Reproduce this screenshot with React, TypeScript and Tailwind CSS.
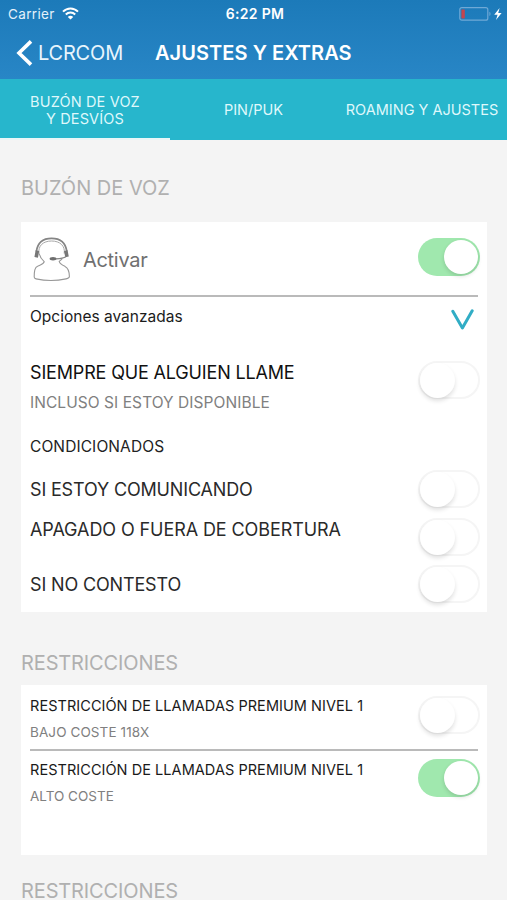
import { useState } from "react"
import clsx from "clsx"

const TABS = [
  { id: "buzon", lines: ["BUZÓN DE VOZ", "Y DESVÍOS"] },
  { id: "pin", lines: ["PIN/PUK"] },
  { id: "roaming", lines: ["ROAMING Y AJUSTES"] },
]

function Toggle({ label, defaultOn = false, className }: { label: string; defaultOn?: boolean; className?: string }) {
  const [on, setOn] = useState(defaultOn)
  return (
    <button
      type="button"
      role="switch"
      aria-checked={on}
      aria-label={label}
      onClick={() => setOn(!on)}
      className={clsx(
        "flex h-[38px] w-[62px] shrink-0 items-center rounded-full",
        on ? "justify-end bg-[#a0e8ae] pr-[2px]" : "justify-start border-2 border-[#f5f5f5] bg-white",
        className,
      )}
    >
      <span
        className={clsx(
          "rounded-full bg-white",
          on
            ? "size-[34px] shadow-[0_2px_4px_rgba(0,0,0,0.14)]"
            : "size-[35px] shadow-[0_3px_4px_rgba(0,0,0,0.12)]",
        )}
      />
    </button>
  )
}

function WifiIcon() {
  return (
    <svg width="17" height="13" viewBox="0 0 17 13" fill="none" stroke="white" strokeWidth="2">
      <path d="M1 4.6C5.2 .3 11.8 .3 16 4.6" />
      <path d="M3.8 7.5C6.4 4.9 10.6 4.9 13.2 7.5" />
      <path d="M8.5 12.6L5.8 9.9C7.3 8.4 9.7 8.4 11.2 9.9Z" fill="white" stroke="none" />
    </svg>
  )
}

function BatteryIcon() {
  return (
    <svg width="43" height="16" viewBox="0 0 43 16" fill="none">
      <rect x="0.8" y="1.6" width="28" height="12.6" rx="2" stroke="#6fa9d6" strokeWidth="1.2" />
      <rect x="2.4" y="3.4" width="3.4" height="9" rx="0.6" fill="#c4454f" />
      <path d="M30.4 5.8C31.9 6.4 31.9 9.4 30.4 10Z" fill="#6fa9d6" />
      <path d="M40.6 2L35.2 8.8H38.6L37 14L42.6 7H39.2Z" fill="white" />
    </svg>
  )
}

function HeadsetIcon() {
  return (
    <svg width="38" height="46" viewBox="0 0 38 46" fill="none" strokeLinecap="butt">
      <path
        d="M6.2 17.5C7 21.5 9 23.8 11.2 25.6C11 28 8 28.6 5 30C1.5 31.5 1.3 35 1.2 41C1.2 42 1.6 42.6 3 42.9C12 44.8 24 44.8 33 42.9C35 42.5 36.4 42 36.4 40.5C36.3 35 35.5 32 32 30.4C29 29 26.8 28 26.2 25.4C27.4 24.6 28.4 23.6 29.2 22.6"
        stroke="#989898"
        strokeWidth="1.1"
      />
      <path d="M6 17.5C4.8 10 10 5 18.6 5C27 5 32.4 10 31.2 17.5" stroke="#a8a8a8" strokeWidth="1" />
      <path d="M3.4 15.5C4.6 6.5 10.5 2.4 18.6 2.4C26.8 2.4 32.6 6.5 33.8 15.5" stroke="#858585" strokeWidth="1.8" />
      <path d="M4.4 14.6L3.2 21.4M32.8 14.6L34 20.8" stroke="#777" strokeWidth="3.6" />
      <path d="M33 20.5C30.5 22.6 27 22.8 23 22.8" stroke="#858585" strokeWidth="1.2" />
      <ellipse cx="20" cy="22.8" rx="3.4" ry="1.7" fill="#6e6e6e" />
    </svg>
  )
}

function SectionTitle({ children }: { children: string }) {
  return <h2 className="text-[20px] leading-5 text-[#b0b0b0]">{children}</h2>
}

function Divider() {
  return <div className="mr-[2px] h-[2px] bg-[#bababa]" />
}

export default function App() {
  const [tab, setTab] = useState("buzon")

  return (
    <div className="flex h-[900px] w-[507px] flex-col overflow-hidden bg-[#f4f4f4] font-['Inter',sans-serif]">
      <header className="h-[79px] shrink-0 bg-linear-to-b from-[#1c7ab9] to-[#2886c6] text-white">
        <div className="grid h-[27px] grid-cols-3 items-center pl-2 pr-[5px] text-[13.5px] leading-5">
          <div className="flex items-center gap-[7px] text-[#e4f1fa]">
            <span className="tracking-[0.35px]">Carrier</span>
            <WifiIcon />
          </div>
          <span className="text-center text-[14px] font-semibold tracking-[0.3px]">6:22 PM</span>
          <div className="flex justify-end">
            <BatteryIcon />
          </div>
        </div>
        <div className="flex h-[51px] items-center pl-4">
          <button type="button" className="flex items-center gap-[5px] text-[20px] leading-5 tracking-[-0.2px] text-[#e8f5fd]">
            <svg width="17" height="26" viewBox="0 0 17 26" fill="none" stroke="white" strokeWidth="3.6">
              <path d="M15 1.4L3 13L15 24.6" />
            </svg>
            LCRCOM
          </button>
          <h1 className="ml-8 text-[20px] font-semibold leading-5 tracking-[0.05px]">AJUSTES Y EXTRAS</h1>
        </div>
      </header>

      <nav className="grid h-[61px] shrink-0 grid-cols-[170px_167px_170px] bg-[#27b6cc] text-[14.5px] leading-[17px] text-[#dff8fb]">
        {TABS.map((t) => (
          <button
            key={t.id}
            type="button"
            onClick={() => setTab(t.id)}
            className={clsx(
              "flex flex-col items-center justify-center whitespace-nowrap border-b-2 pt-[2px]",
              tab === t.id ? "border-[#e9f6f7] tracking-[0.15px]" : "border-[#27b6cc]",
            )}
          >
            {t.lines.map((line) => (
              <span key={line}>{line}</span>
            ))}
          </button>
        ))}
      </nav>

      <main className="px-5 pl-[21px] pt-[38px]">
        <SectionTitle>BUZÓN DE VOZ</SectionTitle>

        <section className="mt-[24px] h-[390px] bg-white pl-[9px] pr-[7px] leading-5 text-[#2a2a2a]">
          <div className="flex h-[73px] items-start pt-4">
            <span className="ml-[3px] -mt-[2px]">
              <HeadsetIcon />
            </span>
            <span className="ml-3 mt-[12px] text-[20px] tracking-[-0.3px] text-[#707070]">Activar</span>
            <Toggle label="Activar" defaultOn className="ml-auto" />
          </div>
          <Divider />

          <div className="flex h-[64px] items-start justify-between pr-[6px] pt-[10px]">
            <span className="text-[15.5px] text-[#1c1c1c]">Opciones avanzadas</span>
            <svg className="mt-[2px]" width="23" height="21" viewBox="0 0 23 21" fill="none" stroke="#31adc5" strokeWidth="3" strokeLinecap="round" strokeLinejoin="round">
              <path d="M1.8 2.2L11.4 19L21.2 1.8" />
            </svg>
          </div>

          <div className="flex h-[75px] items-start justify-between">
            <div className="flex flex-col gap-[10px] pt-[2px]">
              <span className="text-[18px] tracking-[-0.16px] text-[#111]">SIEMPRE QUE ALGUIEN LLAME</span>
              <span className="text-[15.5px] tracking-[0.06px] text-[#808080]">INCLUSO SI ESTOY DISPONIBLE</span>
            </div>
            <Toggle label="Siempre que alguien llame" />
          </div>

          <div className="h-[34px] pt-px text-[15.5px] tracking-[0.1px] text-[#222]">CONDICIONADOS</div>

          <div className="flex h-[48px] items-start justify-between text-[18px]">
            <span className="mt-[10px] tracking-[-0.16px]">SI ESTOY COMUNICANDO</span>
            <Toggle label="Si estoy comunicando" />
          </div>
          <div className="flex h-[47px] items-start justify-between text-[18px]">
            <span className="mt-[2px] tracking-[-0.09px]">APAGADO O FUERA DE COBERTURA</span>
            <Toggle label="Apagado o fuera de cobertura" />
          </div>
          <div className="flex items-start justify-between text-[18px]">
            <span className="mt-[10px] tracking-[-0.15px]">SI NO CONTESTO</span>
            <Toggle label="Si no contesto" />
          </div>
        </section>

        <div className="mt-[41px] tracking-[-0.13px]">
          <SectionTitle>RESTRICCIONES</SectionTitle>
        </div>

        <section className="mt-3 h-[170px] bg-white pl-[9px] pr-[7px] leading-5">
          <div className="flex h-[64px] items-start justify-between pt-[11px]">
            <div className="flex flex-col gap-[6px]">
              <span className="text-[14.5px] tracking-[0.05px] text-[#1a1a1a]">RESTRICCIÓN DE LLAMADAS PREMIUM NIVEL 1</span>
              <span className="text-[13.5px] tracking-[0.1px] text-[#808080]">BAJO COSTE 118X</span>
            </div>
            <Toggle label="Bajo coste 118X" />
          </div>
          <Divider />
          <div className="flex items-start justify-between pt-2">
            <div className="flex flex-col gap-[6px] pt-[1px]">
              <span className="text-[14.5px] tracking-[0.05px] text-[#1a1a1a]">RESTRICCIÓN DE LLAMADAS PREMIUM NIVEL 1</span>
              <span className="text-[13.5px] text-[#808080]">ALTO COSTE</span>
            </div>
            <Toggle label="Alto coste" defaultOn />
          </div>
        </section>

        <div className="mt-[26px] tracking-[-0.13px]">
          <SectionTitle>RESTRICCIONES</SectionTitle>
        </div>
      </main>
    </div>
  )
}
